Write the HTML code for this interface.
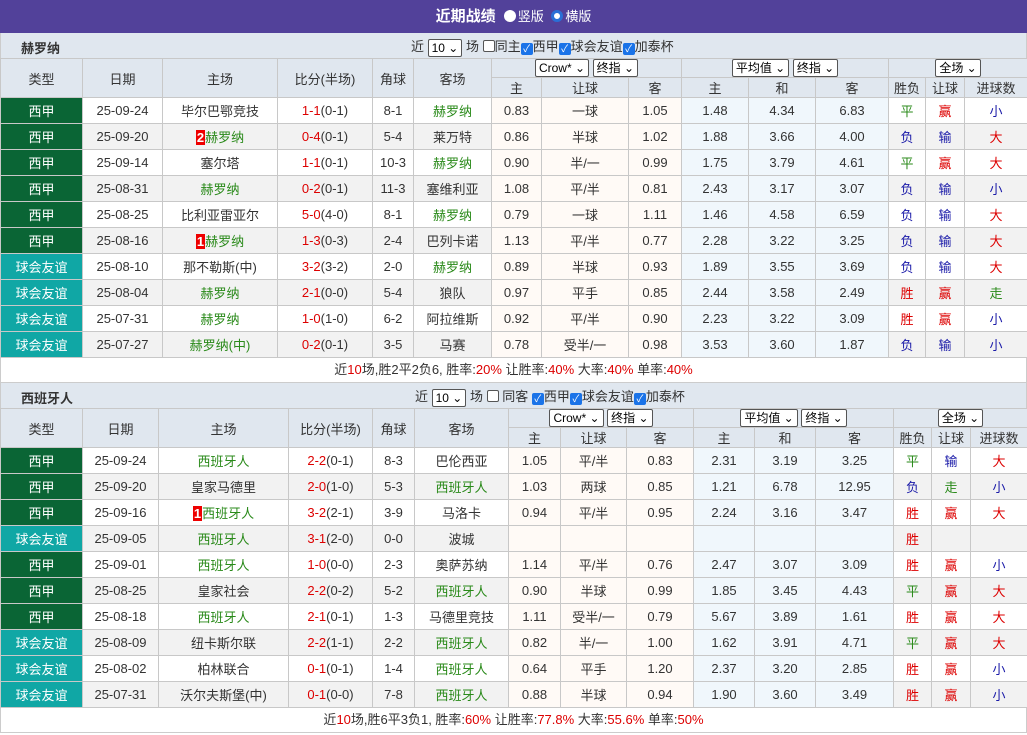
<!DOCTYPE html>
<html><head><meta charset="utf-8"><style>
*{box-sizing:border-box;margin:0;padding:0}
body{width:1027px;height:735px;background:#fff;font-family:"Liberation Sans","Noto Sans CJK SC",sans-serif;font-size:13px;color:#333;overflow:hidden}
.top{height:33px;background:#52419a;color:#fff;text-align:center;font-weight:bold;font-size:15px;line-height:33px}
.top span{font-weight:normal;font-size:13px}
.rad{display:inline-block;width:12px;height:12px;border-radius:50%;background:#fff;vertical-align:-1px;margin:0 2px 0 4px}
.rad.on{background:#fff;border:3px solid #2a6fd6;box-shadow:0 0 0 1px #fff inset}
.bar{height:25px;background:#e0e7ef;position:relative;border-left:1px solid #ccc;border-right:1px solid #ccc}
.bar b{position:absolute;left:20px;top:5px;font-size:13px}
.bar .ctl{position:absolute;top:3px;font-size:13px;white-space:nowrap}
.sel{display:inline-block;border:1px solid #555;background:#fff;font-size:12px;height:18px;line-height:16px;padding:0 3px;border-radius:2px;vertical-align:middle;color:#000}
.cb{display:inline-block;width:12px;height:12px;border:1px solid #555;border-radius:2px;vertical-align:-1px;background:#fff}
.cb.on{background:#1a73e8;border-color:#1a73e8;color:#fff;font-size:10px;line-height:11px;text-align:center}
table{border-collapse:collapse;table-layout:fixed;width:1027px}
td{border:1px solid #c8c8c8;text-align:center;height:26px;padding:0;white-space:nowrap;overflow:hidden}
thead td{background:#e0e7ef;height:19px;font-size:13px}
tr.e td{background:#f2f2f2}
tr td.o1{background:#fffaf6}
tr td.o2{background:#f0f7fc}
tr td.xj{background:#0a6535;color:#fff}
tr td.yy{background:#10a7a5;color:#fff}
.g{color:#2a8a1a}.r{color:#d00}.b{color:#1a1aa8}.n{background:#e00;color:#fff;font-weight:bold;padding:0 1px}
.sum{height:25px;text-align:center;line-height:24px;border:1px solid #ccc;border-top:none}
.sum i{font-style:normal;color:#d00}
</style></head><body>
<div class="top">近期战绩 <span><i class="rad"></i>竖版 <i class="rad on"></i>横版</span></div>
<div class="bar"><b>赫罗纳</b><div class="ctl" style="left:410px">近 <span class="sel">10 ⌄</span> 场 <span class="cb"></span>同主<span class="cb on">✓</span>西甲<span class="cb on">✓</span>球会友谊<span class="cb on">✓</span>加泰杯</div></div>
<table>
<colgroup><col style="width:82px"><col style="width:80px"><col style="width:115px"><col style="width:95px"><col style="width:41px"><col style="width:78px"><col style="width:50px"><col style="width:87px"><col style="width:53px"><col style="width:67px"><col style="width:67px"><col style="width:73px"><col style="width:37px"><col style="width:39px"><col style="width:63px"></colgroup>
<thead><tr><td rowspan="2">类型</td><td rowspan="2">日期</td><td rowspan="2">主场</td><td rowspan="2">比分(半场)</td><td rowspan="2">角球</td><td rowspan="2">客场</td><td colspan="3"><span class="sel">Crow* ⌄</span> <span class="sel">终指 ⌄</span></td><td colspan="3"><span class="sel">平均值 ⌄</span> <span class="sel">终指 ⌄</span></td><td colspan="3"><span class="sel">全场 ⌄</span></td></tr>
<tr><td>主</td><td>让球</td><td>客</td><td>主</td><td>和</td><td>客</td><td>胜负</td><td>让球</td><td>进球数</td></tr></thead>
<tbody>
<tr><td class="xj">西甲</td><td>25-09-24</td><td>毕尔巴鄂竞技</td><td><span class="r">1-1</span>(0-1)</td><td>8-1</td><td class="g">赫罗纳</td><td class="o1">0.83</td><td class="o1">一球</td><td class="o1">1.05</td><td class="o2">1.48</td><td class="o2">4.34</td><td class="o2">6.83</td><td class="g">平</td><td class="r">赢</td><td class="b">小</td></tr>
<tr class="e"><td class="xj">西甲</td><td>25-09-20</td><td><span class="n">2</span><span class="g">赫罗纳</span></td><td><span class="r">0-4</span>(0-1)</td><td>5-4</td><td>莱万特</td><td class="o1">0.86</td><td class="o1">半球</td><td class="o1">1.02</td><td class="o2">1.88</td><td class="o2">3.66</td><td class="o2">4.00</td><td class="b">负</td><td class="b">输</td><td class="r">大</td></tr>
<tr><td class="xj">西甲</td><td>25-09-14</td><td>塞尔塔</td><td><span class="r">1-1</span>(0-1)</td><td>10-3</td><td class="g">赫罗纳</td><td class="o1">0.90</td><td class="o1">半/一</td><td class="o1">0.99</td><td class="o2">1.75</td><td class="o2">3.79</td><td class="o2">4.61</td><td class="g">平</td><td class="r">赢</td><td class="r">大</td></tr>
<tr class="e"><td class="xj">西甲</td><td>25-08-31</td><td class="g">赫罗纳</td><td><span class="r">0-2</span>(0-1)</td><td>11-3</td><td>塞维利亚</td><td class="o1">1.08</td><td class="o1">平/半</td><td class="o1">0.81</td><td class="o2">2.43</td><td class="o2">3.17</td><td class="o2">3.07</td><td class="b">负</td><td class="b">输</td><td class="b">小</td></tr>
<tr><td class="xj">西甲</td><td>25-08-25</td><td>比利亚雷亚尔</td><td><span class="r">5-0</span>(4-0)</td><td>8-1</td><td class="g">赫罗纳</td><td class="o1">0.79</td><td class="o1">一球</td><td class="o1">1.11</td><td class="o2">1.46</td><td class="o2">4.58</td><td class="o2">6.59</td><td class="b">负</td><td class="b">输</td><td class="r">大</td></tr>
<tr class="e"><td class="xj">西甲</td><td>25-08-16</td><td><span class="n">1</span><span class="g">赫罗纳</span></td><td><span class="r">1-3</span>(0-3)</td><td>2-4</td><td>巴列卡诺</td><td class="o1">1.13</td><td class="o1">平/半</td><td class="o1">0.77</td><td class="o2">2.28</td><td class="o2">3.22</td><td class="o2">3.25</td><td class="b">负</td><td class="b">输</td><td class="r">大</td></tr>
<tr><td class="yy">球会友谊</td><td>25-08-10</td><td>那不勒斯(中)</td><td><span class="r">3-2</span>(3-2)</td><td>2-0</td><td class="g">赫罗纳</td><td class="o1">0.89</td><td class="o1">半球</td><td class="o1">0.93</td><td class="o2">1.89</td><td class="o2">3.55</td><td class="o2">3.69</td><td class="b">负</td><td class="b">输</td><td class="r">大</td></tr>
<tr class="e"><td class="yy">球会友谊</td><td>25-08-04</td><td class="g">赫罗纳</td><td><span class="r">2-1</span>(0-0)</td><td>5-4</td><td>狼队</td><td class="o1">0.97</td><td class="o1">平手</td><td class="o1">0.85</td><td class="o2">2.44</td><td class="o2">3.58</td><td class="o2">2.49</td><td class="r">胜</td><td class="r">赢</td><td class="g">走</td></tr>
<tr><td class="yy">球会友谊</td><td>25-07-31</td><td class="g">赫罗纳</td><td><span class="r">1-0</span>(1-0)</td><td>6-2</td><td>阿拉维斯</td><td class="o1">0.92</td><td class="o1">平/半</td><td class="o1">0.90</td><td class="o2">2.23</td><td class="o2">3.22</td><td class="o2">3.09</td><td class="r">胜</td><td class="r">赢</td><td class="b">小</td></tr>
<tr class="e"><td class="yy">球会友谊</td><td>25-07-27</td><td class="g">赫罗纳(中)</td><td><span class="r">0-2</span>(0-1)</td><td>3-5</td><td>马赛</td><td class="o1">0.78</td><td class="o1">受半/一</td><td class="o1">0.98</td><td class="o2">3.53</td><td class="o2">3.60</td><td class="o2">1.87</td><td class="b">负</td><td class="b">输</td><td class="b">小</td></tr>
</tbody></table>
<div class="sum">近<i>10</i>场,胜2平2负6, 胜率:<i>20%</i> 让胜率:<i>40%</i> 大率:<i>40%</i> 单率:<i>40%</i></div>
<div class="bar" style="margin-top:0"><b>西班牙人</b><div class="ctl" style="left:414px">近 <span class="sel">10 ⌄</span> 场 <span class="cb"></span> 同客 <span class="cb on">✓</span>西甲<span class="cb on">✓</span>球会友谊<span class="cb on">✓</span>加泰杯</div></div>
<table>
<colgroup><col style="width:82px"><col style="width:76px"><col style="width:130px"><col style="width:84px"><col style="width:42px"><col style="width:94px"><col style="width:52px"><col style="width:66px"><col style="width:67px"><col style="width:61px"><col style="width:61px"><col style="width:78px"><col style="width:38px"><col style="width:39px"><col style="width:57px"></colgroup>
<thead><tr><td rowspan="2">类型</td><td rowspan="2">日期</td><td rowspan="2">主场</td><td rowspan="2">比分(半场)</td><td rowspan="2">角球</td><td rowspan="2">客场</td><td colspan="3"><span class="sel">Crow* ⌄</span> <span class="sel">终指 ⌄</span></td><td colspan="3"><span class="sel">平均值 ⌄</span> <span class="sel">终指 ⌄</span></td><td colspan="3"><span class="sel">全场 ⌄</span></td></tr>
<tr><td>主</td><td>让球</td><td>客</td><td>主</td><td>和</td><td>客</td><td>胜负</td><td>让球</td><td>进球数</td></tr></thead>
<tbody>
<tr><td class="xj">西甲</td><td>25-09-24</td><td class="g">西班牙人</td><td><span class="r">2-2</span>(0-1)</td><td>8-3</td><td>巴伦西亚</td><td class="o1">1.05</td><td class="o1">平/半</td><td class="o1">0.83</td><td class="o2">2.31</td><td class="o2">3.19</td><td class="o2">3.25</td><td class="g">平</td><td class="b">输</td><td class="r">大</td></tr>
<tr class="e"><td class="xj">西甲</td><td>25-09-20</td><td>皇家马德里</td><td><span class="r">2-0</span>(1-0)</td><td>5-3</td><td class="g">西班牙人</td><td class="o1">1.03</td><td class="o1">两球</td><td class="o1">0.85</td><td class="o2">1.21</td><td class="o2">6.78</td><td class="o2">12.95</td><td class="b">负</td><td class="g">走</td><td class="b">小</td></tr>
<tr><td class="xj">西甲</td><td>25-09-16</td><td><span class="n">1</span><span class="g">西班牙人</span></td><td><span class="r">3-2</span>(2-1)</td><td>3-9</td><td>马洛卡</td><td class="o1">0.94</td><td class="o1">平/半</td><td class="o1">0.95</td><td class="o2">2.24</td><td class="o2">3.16</td><td class="o2">3.47</td><td class="r">胜</td><td class="r">赢</td><td class="r">大</td></tr>
<tr class="e"><td class="yy">球会友谊</td><td>25-09-05</td><td class="g">西班牙人</td><td><span class="r">3-1</span>(2-0)</td><td>0-0</td><td>波城</td><td class="o1"></td><td class="o1"></td><td class="o1"></td><td class="o2"></td><td class="o2"></td><td class="o2"></td><td class="r">胜</td><td></td><td></td></tr>
<tr><td class="xj">西甲</td><td>25-09-01</td><td class="g">西班牙人</td><td><span class="r">1-0</span>(0-0)</td><td>2-3</td><td>奥萨苏纳</td><td class="o1">1.14</td><td class="o1">平/半</td><td class="o1">0.76</td><td class="o2">2.47</td><td class="o2">3.07</td><td class="o2">3.09</td><td class="r">胜</td><td class="r">赢</td><td class="b">小</td></tr>
<tr class="e"><td class="xj">西甲</td><td>25-08-25</td><td>皇家社会</td><td><span class="r">2-2</span>(0-2)</td><td>5-2</td><td class="g">西班牙人</td><td class="o1">0.90</td><td class="o1">半球</td><td class="o1">0.99</td><td class="o2">1.85</td><td class="o2">3.45</td><td class="o2">4.43</td><td class="g">平</td><td class="r">赢</td><td class="r">大</td></tr>
<tr><td class="xj">西甲</td><td>25-08-18</td><td class="g">西班牙人</td><td><span class="r">2-1</span>(0-1)</td><td>1-3</td><td>马德里竞技</td><td class="o1">1.11</td><td class="o1">受半/一</td><td class="o1">0.79</td><td class="o2">5.67</td><td class="o2">3.89</td><td class="o2">1.61</td><td class="r">胜</td><td class="r">赢</td><td class="r">大</td></tr>
<tr class="e"><td class="yy">球会友谊</td><td>25-08-09</td><td>纽卡斯尔联</td><td><span class="r">2-2</span>(1-1)</td><td>2-2</td><td class="g">西班牙人</td><td class="o1">0.82</td><td class="o1">半/一</td><td class="o1">1.00</td><td class="o2">1.62</td><td class="o2">3.91</td><td class="o2">4.71</td><td class="g">平</td><td class="r">赢</td><td class="r">大</td></tr>
<tr><td class="yy">球会友谊</td><td>25-08-02</td><td>柏林联合</td><td><span class="r">0-1</span>(0-1)</td><td>1-4</td><td class="g">西班牙人</td><td class="o1">0.64</td><td class="o1">平手</td><td class="o1">1.20</td><td class="o2">2.37</td><td class="o2">3.20</td><td class="o2">2.85</td><td class="r">胜</td><td class="r">赢</td><td class="b">小</td></tr>
<tr class="e"><td class="yy">球会友谊</td><td>25-07-31</td><td>沃尔夫斯堡(中)</td><td><span class="r">0-1</span>(0-0)</td><td>7-8</td><td class="g">西班牙人</td><td class="o1">0.88</td><td class="o1">半球</td><td class="o1">0.94</td><td class="o2">1.90</td><td class="o2">3.60</td><td class="o2">3.49</td><td class="r">胜</td><td class="r">赢</td><td class="b">小</td></tr>
</tbody></table>
<div class="sum">近<i>10</i>场,胜6平3负1, 胜率:<i>60%</i> 让胜率:<i>77.8%</i> 大率:<i>55.6%</i> 单率:<i>50%</i></div>
</body></html>
